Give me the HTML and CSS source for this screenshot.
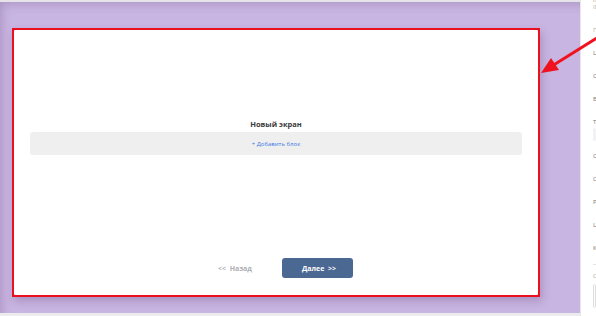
FILE: index.html
```html
<!doctype html>
<html>
	<head>
		<title>Новый экран</title>
		<meta charset="utf8">
		<link rel="stylesheet" href="styles.css">
	</head>
	<body>
		<div class="app">
			<div class="workspace">
				<div class="topbar"></div>
				<div class="canvas">
					<div class="frame">
						<div class="screen">
							<h1 class="screen-title">Новый экран</h1>
							<div class="add-block"><a href="#">+ Добавить блок</a></div>
							<div class="spacer"></div>
							<div class="nav">
								<button class="btn btn-back">&lt;&lt;&nbsp;&nbsp;Назад</button>
								<button class="btn btn-next">Далее&nbsp;&nbsp;&gt;&gt;</button>
							</div>
						</div>
					</div>
				</div>
				<div class="bottombar"></div>
			</div>
			<aside class="panel">
				<div class="panel-head">
					<div class="panel-name">name</div>
					<div class="panel-id">ID: 1</div>
				</div>
				<div class="field section">Параметры</div>
				<div class="field">Цвет фона</div>
				<div class="field">Сетка</div>
				<div class="field">Выравнивание</div>
				<div class="field">Текст</div>
				<div class="input"></div>
				<div class="field">Ссылка</div>
				<div class="field">Стиль</div>
				<div class="field">Размер</div>
				<div class="field">Цвет текста</div>
				<div class="field">Класс</div>
				<hr class="divider">
				<div class="field section">Скрипт</div>
				<div class="input big"></div>
			</aside>
		</div>
		<!-- pointer arrow drawn over the page -->
		<svg class="arrow" width="596" height="316" viewBox="0 0 596 316">
			<line x1="605" y1="33" x2="552" y2="66" stroke="#f0121e" stroke-width="3"/>
			<polygon points="541,73 551,58 559,70" fill="#f0121e"/>
		</svg>
	</body>
</html>
```

FILE: styles.css
```css
html, body {
	margin: 0;
	padding: 0;
}
body {
	width: 596px;
	height: 316px;
	overflow: hidden;
	position: relative;
	font-family: "Open Sans", "Liberation Sans", sans-serif;
	color: #333;
}
.app {
	display: flex;
	height: 316px;
}
.workspace {
	width: 580px;
	display: flex;
	flex-direction: column;
}
.topbar {
	height: 2px;
	background: #e6e3ea;
}
.canvas {
	height: 311px;
	box-sizing: border-box;
	padding: 26px 0 0 12px;
	background: #c9b5e1;
	box-shadow: inset 6px 6px 10px -4px rgba(80, 50, 110, .25);
}
.bottombar {
	flex: 1;
	background: #ecebee;
}
.frame {
	width: 528px;
	height: 269px;
	box-sizing: border-box;
	border: 2px solid #ea1020;
	box-shadow: 2px 4px 8px rgba(70, 40, 100, .25);
}
.screen {
	height: 100%;
	box-sizing: border-box;
	background: #fff;
	border-radius: 2px;
	padding: 88px 16px 17px;
	display: flex;
	flex-direction: column;
}
.screen-title {
	margin: 0 0 2px;
	font-size: 7.5px;
	line-height: 12px;
	font-weight: bold;
	text-align: center;
	color: #3a3a3a;
}
.add-block {
	height: 23px;
	display: flex;
	align-items: center;
	justify-content: center;
	background: #efefef;
	border-radius: 3px;
}
.add-block a {
	font-size: 6px;
	color: #3d7ae6;
	text-decoration: none;
}
.spacer {
	flex: 1;
}
.nav {
	display: flex;
	justify-content: center;
	gap: 11px;
}
.btn {
	width: 71px;
	height: 20px;
	padding: 0;
	border: 0;
	border-radius: 3px;
	font-family: inherit;
	font-size: 7px;
	font-weight: bold;
}
.btn-back {
	background: none;
	color: #aeb0b4;
}
.btn-next {
	padding-left: 4px;
	background: #4b6892;
	color: #fff;
}
.panel {
	flex: 1;
	overflow: hidden;
	white-space: nowrap;
	background: #fff;
	border-left: 1px solid #e7e7ea;
	padding-left: 12px;
	font-size: 6px;
	color: #777;
}
.panel-head {
	height: 22px;
	line-height: 7px;
}
.panel-name {
	color: #999;
	margin-top: -3px;
}
.panel-id {
	color: #aaa;
}
.field {
	height: 23px;
	line-height: 23px;
}
.section {
	color: #aaa;
}
.input {
	height: 13px;
	margin: -6px 0 4px;
	background: #f2f2f4;
	border-radius: 3px;
}
.divider {
	margin: 4px 0 0;
	border: 0;
	border-top: 1px solid #e5e5e7;
}
.big {
	height: 22px;
	margin-top: -4px;
	background: #fff;
	border: 1px solid #ddd;
}
.arrow {
	position: absolute;
	top: 0;
	left: 0;
	pointer-events: none;
}
```
